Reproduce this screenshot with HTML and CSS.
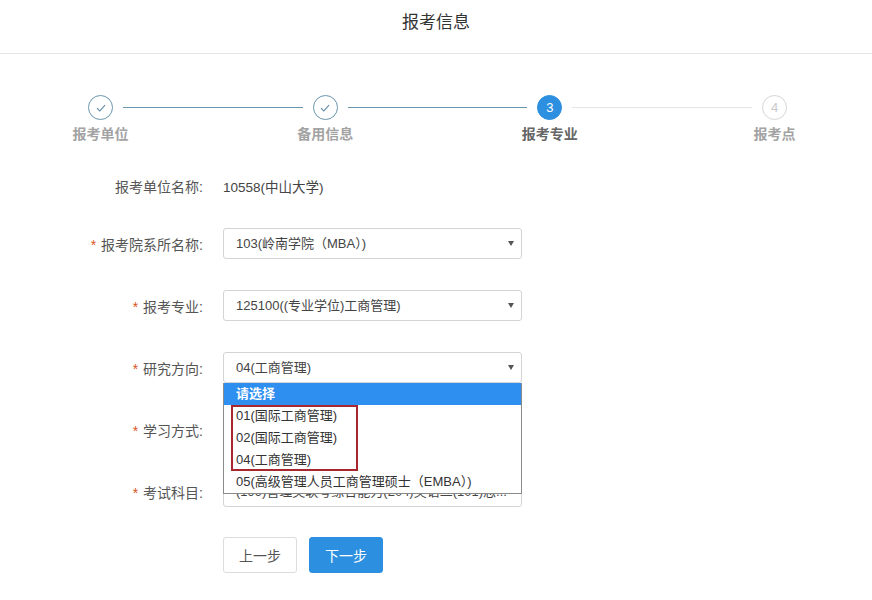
FILE: index.html
```html
<!DOCTYPE html>
<html lang="zh-CN">
<head>
    <meta charset="UTF-8" />
    <title>报考信息</title>
    <link rel="stylesheet" href="styles.css">
</head>
<body>
    <div class="header">报考信息</div>

    <!-- Steps -->
    <div class="steps">
        <div class="step done">
            <div class="circle">
                <svg width="10" height="8" viewBox="0 0 10 8"><path d="M1 4.2 L3.8 7 L9 1.2" fill="none" stroke="#5c8aa6" stroke-width="1.1"/></svg>
            </div>
            <div class="step-label">报考单位</div>
        </div>
        <div class="step-line done"></div>
        <div class="step done">
            <div class="circle">
                <svg width="10" height="8" viewBox="0 0 10 8"><path d="M1 4.2 L3.8 7 L9 1.2" fill="none" stroke="#5c8aa6" stroke-width="1.1"/></svg>
            </div>
            <div class="step-label">备用信息</div>
        </div>
        <div class="step-line done"></div>
        <div class="step active">
            <div class="circle">3</div>
            <div class="step-label">报考专业</div>
        </div>
        <div class="step-line"></div>
        <div class="step">
            <div class="circle">4</div>
            <div class="step-label">报考点</div>
        </div>
    </div>

    <!-- Form -->
    <div class="form">
        <div class="row row-static">
            <div class="label">报考单位名称:</div>
            <div class="value">10558(中山大学)</div>
        </div>
        <div class="row">
            <div class="label"><span class="req">*</span>报考院系所名称:</div>
            <div class="select">103(岭南学院（MBA）)<span class="arrow"></span></div>
        </div>
        <div class="row">
            <div class="label"><span class="req">*</span>报考专业:</div>
            <div class="select">125100((专业学位)工商管理)<span class="arrow"></span></div>
        </div>
        <div class="row">
            <div class="label"><span class="req">*</span>研究方向:</div>
            <div class="select open">04(工商管理)<span class="arrow"></span>
                <div class="dropdown">
                    <div class="option selected">请选择</div>
                    <div class="option">01(国际工商管理)</div>
                    <div class="option">02(国际工商管理)</div>
                    <div class="option">04(工商管理)</div>
                    <div class="option">05(高级管理人员工商管理硕士（EMBA）)</div>
                    <div class="mark"></div>
                </div>
            </div>
        </div>
        <div class="row">
            <div class="label"><span class="req">*</span>学习方式:</div>
            <div class="select">全日制<span class="arrow"></span></div>
        </div>
        <div class="row">
            <div class="label"><span class="req">*</span>考试科目:</div>
            <div class="select">(199)管理类联考综合能力(204)英语二(101)思...<span class="arrow"></span></div>
        </div>
        <div class="buttons">
            <button class="btn">上一步</button>
            <button class="btn primary">下一步</button>
        </div>
    </div>
</body>
</html>
```

FILE: styles.css
```css
body {
    margin: 0;
    font-family: "Liberation Sans", "Noto Sans CJK SC", sans-serif;
    font-size: 13px;
    color: #333;
    background: #fff;
}

.header {
    height: 53px;
    line-height: 45px;
    text-align: center;
    font-size: 17px;
    color: #333;
    border-bottom: 1px solid #e6e6e6;
}

/* Steps */
.steps {
    display: flex;
    align-items: flex-start;
    padding: 41px 75px 0 78px;
    height: 75px;
}

.step {
    width: 45px;
    display: flex;
    flex-direction: column;
    align-items: center;
}

.circle {
    width: 23px;
    height: 23px;
    border: 1px solid #d6d6d6;
    border-radius: 50%;
    display: flex;
    align-items: center;
    justify-content: center;
    font-size: 13px;
    color: #c8c8c8;
}

.step.done .circle {
    border-color: #6896ad;
}

.step.active .circle {
    background: #2d8fdf;
    border-color: #2d8fdf;
    color: #fff;
}

.step-label {
    white-space: nowrap;
    margin-top: 3px;
    font-size: 14px;
    font-weight: bold;
    color: #a3a3a3;
}

.step.active .step-label {
    color: #666;
}

.step-line {
    flex: 1;
    height: 1px;
    margin-top: 12px;
    background: #e6e6e6;
}

.step-line.done {
    background: #6896ad;
}

/* Form */
.row {
    display: flex;
    align-items: center;
    height: 31px;
    margin-bottom: 31px;
}

.row-static {
    margin-bottom: 27px;
}

.label {
    width: 203px;
    text-align: right;
    font-size: 14px;
    color: #555;
    flex-shrink: 0;
}

.req {
    color: #d9541e;
    margin-right: 5px;
}

.value {
    margin-left: 20px;
    font-size: 13.5px;
    color: #444;
}

.select {
    position: relative;
    margin-left: 20px;
    width: 285px;
    height: 29px;
    line-height: 29px;
    padding-left: 12px;
    border: 1px solid #d4d4d4;
    border-radius: 3px;
    color: #444;
    white-space: nowrap;
}

.arrow {
    position: absolute;
    right: 7px;
    top: 12px;
    border-left: 3px solid transparent;
    border-right: 3px solid transparent;
    border-top: 5px solid #555;
}

.dropdown {
    position: absolute;
    left: -1px;
    top: 30px;
    width: 297px;
    background: #fff;
    border: 1px solid #8a8a8a;
    border-top: none;
    z-index: 2;
}

.option {
    height: 22px;
    line-height: 22px;
    padding-left: 12px;
    color: #333;
}

.option.selected {
    background: #2f8ff0;
    color: #fff;
    font-weight: bold;
}

.mark {
    position: absolute;
    left: 7px;
    top: 22px;
    width: 123px;
    height: 62px;
    border: 2px solid #a8262e;
}

/* Buttons */
.buttons {
    display: flex;
    gap: 12px;
    margin-left: 223px;
    margin-top: -1px;
}

.btn {
    width: 74px;
    height: 36px;
    border: 1px solid #dcdcdc;
    border-radius: 3px;
    background: #fff;
    color: #555;
    font-family: "Liberation Sans", "Noto Sans CJK SC", sans-serif;
    font-size: 14px;
    padding: 0;
}

.btn.primary {
    background: #2d8fdf;
    border-color: #2d8fdf;
    color: #fff;
}
```
